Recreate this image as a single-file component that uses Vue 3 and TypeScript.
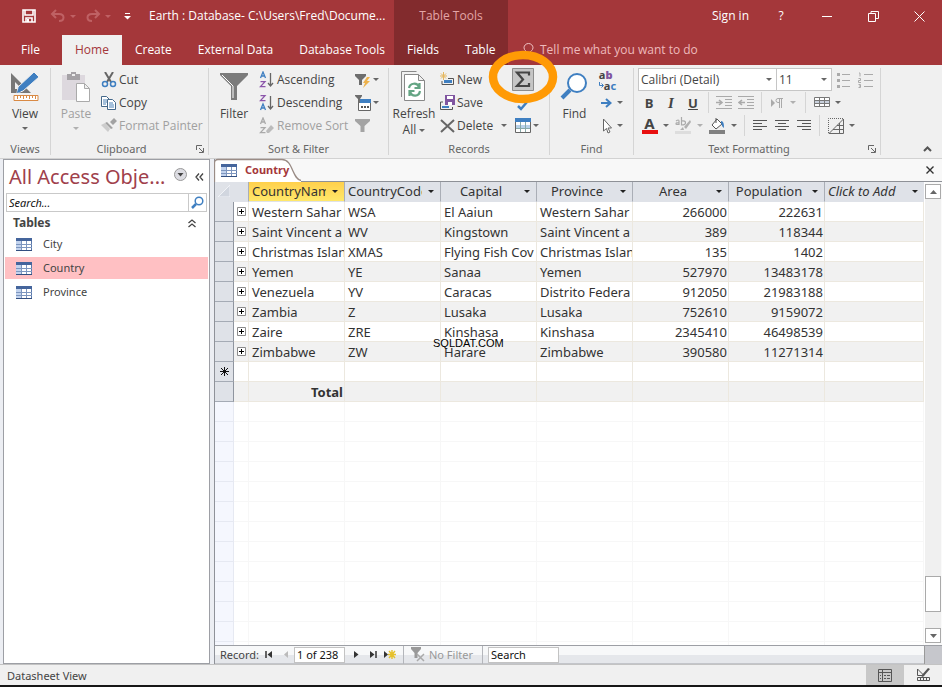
<script setup lang="ts">
import { ref } from 'vue'

interface Country {
  name: string
  code: string
  capital: string
  province: string
  area: number
  population: number
}

const countries: Country[] = [
  { name: 'Western Sahar', code: 'WSA', capital: 'El Aaiun', province: 'Western Sahar', area: 266000, population: 222631 },
  { name: 'Saint Vincent a', code: 'WV', capital: 'Kingstown', province: 'Saint Vincent a', area: 389, population: 118344 },
  { name: 'Christmas Islan', code: 'XMAS', capital: 'Flying Fish Cov', province: 'Christmas Islan', area: 135, population: 1402 },
  { name: 'Yemen', code: 'YE', capital: 'Sanaa', province: 'Yemen', area: 527970, population: 13483178 },
  { name: 'Venezuela', code: 'YV', capital: 'Caracas', province: 'Distrito Federa', area: 912050, population: 21983188 },
  { name: 'Zambia', code: 'Z', capital: 'Lusaka', province: 'Lusaka', area: 752610, population: 9159072 },
  { name: 'Zaire', code: 'ZRE', capital: 'Kinshasa', province: 'Kinshasa', area: 2345410, population: 46498539 },
  { name: 'Zimbabwe', code: 'ZW', capital: 'Harare', province: 'Zimbabwe', area: 390580, population: 11271314 },
]

const columns = ['CountryName', 'CountryCode', 'Capital', 'Province', 'Area', 'Population']
const tables = ['City', 'Country', 'Province']
const tabs = ['File', 'Home', 'Create', 'External Data', 'Database Tools']
const activeTab = ref('Home')
const selected = ref('Country')
const record = ref('1 of 238')
const find = ref('Search')
const navSearch = ref('')
</script>

<template>
  <div class="app">
    <header class="top">
      <div class="top-left">
        <div class="titlebar">
          <button class="qa save" aria-label="Save">
            <svg width="14" height="14" viewBox="0 0 14 14"><path d="M1 1h12v12H1z M3 1v5h8V1 M4 13V9h6v4" fill="none" stroke="#fff" stroke-width="1.6" /><path d="M5 10h2v3H5z" fill="#fff" /></svg>
          </button>
          <button class="qa undo" aria-label="Undo">
            <svg width="27" height="14" viewBox="0 0 27 14"><path d="M6 1L2 5l4 4M2 5h7c6 0 6 7 0 7" fill="none" stroke="#bf6164" stroke-width="2" /><path d="M20 6h6l-3 3z" fill="#bf6164" /></svg>
          </button>
          <button class="qa redo" aria-label="Redo">
            <svg width="27" height="14" viewBox="0 0 27 14"><path d="M10 1l4 4-4 4M14 5H7c-6 0-6 7 0 7" fill="none" stroke="#bf6164" stroke-width="2" /><path d="M20 6h6l-3 3z" fill="#bf6164" /></svg>
          </button>
          <button class="qa" aria-label="Customize Quick Access Toolbar">
            <svg width="7" height="8" viewBox="0 0 7 8"><path d="M1 1.500h5" stroke="#fff" /><path d="M0 4h7L3.500 7.500z" fill="#fff" /></svg>
          </button>
          <span class="title">Earth : Database- C:\Users\Fred\Docume...</span>
        </div>
        <nav class="tabs">
          <button v-for="t in tabs" :key="t" class="tab" :class="{ active: t === activeTab, file: t === 'File' }" @click="activeTab = t">{{ t }}</button>
        </nav>
      </div>
      <div class="context">
        <div class="context-title">Table Tools</div>
        <nav class="tabs"><button class="tab">Fields</button><button class="tab">Table</button></nav>
      </div>
      <div class="top-right">
        <div class="window">
          <button class="signin">Sign in</button>
          <button class="win" aria-label="Help">?</button>
          <button class="win" aria-label="Minimize"><svg width="10" height="10"><path d="M0 5.500h10" stroke="#fff" /></svg></button>
          <button class="win" aria-label="Restore"><svg width="11" height="11"><path d="M.5 2.500h7v8h-7z M3 2.500v-2h7.500v7H8" fill="none" stroke="#fff" /></svg></button>
          <button class="win" aria-label="Close"><svg width="11" height="11"><path d="M.5.5l10 10M10.500.5l-10 10" stroke="#fff" /></svg></button>
        </div>
        <button class="tellme">
          <svg width="11" height="15" viewBox="0 0 11 15"><path d="M4 10C4 8 1 7.500 1 4.800a4.500 4.300 0 0 1 9 0C10 7.500 7 8 7 10z M4 12h3 M4 14h3" fill="none" stroke="#f0c4c5" /></svg>
          Tell me what you want to do
        </button>
      </div>
    </header>

    <section class="ribbon">
      <div class="group views">
        <div class="body">
          <button class="big">
            <svg width="32" height="32" viewBox="0 0 32 32"><path d="M2 2v20h20z M6 11v7h7z" fill="#777" fill-rule="evenodd" /><path d="M8 22l1-6L25 1l5 5-16 14z" fill="#3f7fc1" stroke="#f0f0f0" /><path d="M8 22l1-4 3 3z" fill="#3f7fc1" /><path d="M5 24.500h24v5H5z" fill="#fff" stroke="#d98a45" /><path d="M8.500 25v3M11.500 25v2M14.500 25v3M17.500 25v2M20.500 25v3M23.500 25v2M26.500 25v3" stroke="#d98a45" /></svg>
            <span>View</span><i class="caret"></i>
          </button>
        </div>
        <div class="label"><span>Views</span></div>
      </div>

      <div class="group clipboard">
        <div class="body">
          <button class="big off">
            <svg width="30" height="32" viewBox="0 0 30 32"><path d="M1 4h23v25H1z" fill="#ddd8de" /><path d="M6 3h4V1h5v2h4v6H6z" fill="#a5a2a6" /><path d="M11 3h3v2h-3z" fill="#eee" /><path d="M15.500 12.500h8l5 5v13h-13z M23.500 12.500v5h5" fill="#fff" stroke="#aaa" /></svg>
            <span>Paste</span><i class="caret"></i>
          </button>
          <div class="list">
            <button class="item"><svg width="16" height="16" viewBox="0 0 16 16"><path d="M4 0l6 10M12 0L6 10" stroke="#666" stroke-width="2" /><circle cx="4" cy="12" r="2.500" fill="none" stroke="#3f7fc1" stroke-width="1.500" /><circle cx="12" cy="12" r="2.500" fill="none" stroke="#3f7fc1" stroke-width="1.500" /></svg>Cut</button>
            <button class="item"><svg width="16" height="16" viewBox="0 0 16 16"><path d="M.5 1.500h5l3 3v7h-8z" fill="#fff" stroke="#44688a" /><path d="M2 5h4M2 7h4M2 9h3" stroke="#4c83b8" /><path d="M6.500 4.500h5l3 3v7h-8z" fill="#fff" stroke="#44688a" /><path d="M8 8h4M8 10h5M8 12h5" stroke="#4c83b8" /></svg>Copy</button>
            <button class="item off"><svg width="16" height="16" viewBox="0 0 16 16"><path d="M9 4l4-4 3 3-4 4z M6 4l6 6-2 1-6-6z" fill="#a2a2a2" /><path d="M4 5L0 7l7 7 2-3z" fill="#ccc" /></svg>Format Painter</button>
          </div>
        </div>
        <div class="label launched"><span>Clipboard</span><button class="launch" aria-label="Clipboard options"><svg width="8" height="8"><path d="M.5 5V.5H6M3 3l4 4M7.500 3v4.500H3" fill="none" stroke="#666" /></svg></button></div>
      </div>

      <div class="group sort">
        <div class="body">
          <button class="big">
            <svg width="28" height="32" viewBox="0 0 28 32"><path d="M0 2h28v2L17 15v14h-6V15L0 4z" fill="#7b7b7b" /><path d="M2 4l11 11v12" fill="none" stroke="#fff" /></svg>
            <span>Filter</span>
          </button>
          <div class="list">
            <button class="item"><svg width="16" height="18" viewBox="0 0 16 18"><path d="M1.500 7L4 1l2.500 6M2.500 5h3" fill="none" stroke="#3f7fc1" stroke-width="1.300" /><path d="M1.500 10.600h4.500l-4.500 5h5" fill="none" stroke="#8b55aa" stroke-width="1.300" /><path d="M11.500 2v13M9 12l2.500 3 2.500-3" fill="none" stroke="#666" stroke-width="1.300" /></svg>Ascending</button>
            <button class="item"><svg width="16" height="18" viewBox="0 0 16 18"><path d="M1.500 1.600h4.500l-4.500 5h5" fill="none" stroke="#8b55aa" stroke-width="1.300" /><path d="M1.500 16L4 10l2.500 6M2.500 14h3" fill="none" stroke="#3f7fc1" stroke-width="1.300" /><path d="M11.500 2v13M9 12l2.500 3 2.500-3" fill="none" stroke="#666" stroke-width="1.300" /></svg>Descending</button>
            <button class="item off"><svg width="16" height="18" viewBox="0 0 16 18"><path d="M1.500 7L4 1l2.500 6M2.500 5h3M1.500 10.600h4.500l-4.500 5h5" fill="none" stroke="#aaa" stroke-width="1.300" /><path d="M7 14l5-6 3 3-5 5H8z" fill="#bbb" /></svg>Remove Sort</button>
          </div>
          <div class="list icons">
            <button class="item" aria-label="Selection filter"><svg width="16" height="16" viewBox="0 0 16 16"><path d="M0 2h11v2L7 8v5H4V8L0 4z" fill="#6d6d6d" /><path d="M12 5h3l-3 4h3l-7 7 2-5H8z" fill="#eeb24b" /></svg><i class="caret"></i></button>
            <button class="item" aria-label="Advanced filter"><svg width="16" height="16" viewBox="0 0 16 16"><path d="M3.500 4.500h12v11h-12z" fill="#fff" stroke="#666" /><path d="M4 4h12v4H4z" fill="#3f7fc1" /><path d="M0 0h7v1L5 4v4H3V4L0 1z" fill="#6d6d6d" /><path d="M6 12h2M9 12h2M12 12h2" stroke="#555" stroke-width="2" /></svg><i class="caret"></i></button>
            <button class="item" aria-label="Toggle filter"><svg width="16" height="16" viewBox="0 0 16 16"><path d="M0 1h15v2L9.500 8v6h-4V8L0 3z" fill="#a4a4a4" /></svg></button>
          </div>
        </div>
        <div class="label"><span>Sort &amp; Filter</span></div>
      </div>

      <div class="group records">
        <div class="body">
          <button class="big">
            <svg width="26" height="32" viewBox="0 0 26 32"><path d="M.5 26V.5h15" fill="none" stroke="#888" /><path d="M3.500 3.500h14l6 6v20h-20z M17.500 3.500v6h6" fill="#fff" stroke="#888" /><path d="M8 17c1-5 8-6 10-1M18.500 12v5h-5M19 20c-1 6-8 6-10 1M8.500 25v-5h5" fill="none" stroke="#64a584" stroke-width="2.200" /></svg>
            <span>Refresh</span><span class="second">All <i class="caret"></i></span>
          </button>
          <div class="list">
            <button class="item"><svg width="15" height="16" viewBox="0 0 15 16"><path d="M3.500 0v8M0 4h7M1 1.500l5 5M6 1.500l-5 5" stroke="#e5b75e" /><path d="M8 6.500h5.500v6H2V9" fill="none" stroke="#555" /><path d="M4 8h8v3H4z" fill="#3f7fc1" /></svg>New</button>
            <button class="item"><svg width="15" height="16" viewBox="0 0 15 16"><path d="M3 7H.5v7.500h12V12" fill="none" stroke="#555" /><path d="M2 11h7v2H2z" fill="#3f7fc1" /><path d="M5 0h10v10H5z" fill="#8055a0" /><path d="M7 1h6v3H7z M8 7h4v3H8z" fill="#fff" /></svg>Save</button>
            <button class="item"><svg width="15" height="16" viewBox="0 0 15 16"><path d="M1 2l13 12M14 2L1 14" stroke="#666" stroke-width="2" /></svg>Delete<i class="caret end"></i></button>
          </div>
          <div class="list tools">
            <button class="item totals" aria-label="Totals">
              <svg width="22" height="23" viewBox="0 0 22 23"><path d="M.5.5h21v22H.5z" fill="#c6c6c6" stroke="#8d8d8d" /><path d="M17 7.500V4.500H5l6 7-6 6.500h12v-3" fill="none" stroke="#444" stroke-width="2.200" /></svg>
              <svg class="ring" width="70" height="54" viewBox="0 0 70 54"><ellipse cx="35" cy="27" rx="30" ry="22" fill="none" stroke="#ff9a05" stroke-width="8.500" /></svg>
            </button>
            <button class="item" aria-label="Spelling"><svg width="16" height="16" viewBox="0 0 16 16"><path d="M3 11l3 3 6-7" fill="none" stroke="#3f7fc1" stroke-width="2.500" /></svg></button>
            <button class="item" aria-label="More"><svg width="16" height="15" viewBox="0 0 16 15"><path d="M.5.5h15v14H.5z" fill="#fff" stroke="#666" /><path d="M0 0h16v4H0z" fill="#3f7fc1" /><path d="M1 7h14v3H1z" fill="#b8d2ea" /><path d="M5.500 4v10M10.500 4v10M1 10.500h14" stroke="#8aa" /></svg><i class="caret"></i></button>
          </div>
        </div>
        <div class="label"><span>Records</span></div>
      </div>

      <div class="group find">
        <div class="body">
          <button class="big">
            <svg width="28" height="32" viewBox="0 0 28 32"><path d="M10 19L2 27" stroke="#3f7fc1" stroke-width="4" /><circle cx="17" cy="12" r="9" fill="#fff" stroke="#3f7fc1" stroke-width="2" /></svg>
            <span>Find</span>
          </button>
          <div class="list icons">
            <button class="item" aria-label="Replace">
              <span class="abac"><span>a<b>b</b></span><span class="swap"><svg width="5" height="6" viewBox="0 0 5 6"><path d="M.5 0v3.500H4M2.500 1.500l2 2-2 2" fill="none" stroke="#3f7fc1" /></svg>a<em>c</em></span></span>
            </button>
            <button class="item" aria-label="Go To"><svg width="16" height="16" viewBox="0 0 16 16"><path d="M2 8h9M7 4l4.500 4L7 12" fill="none" stroke="#3f7fc1" stroke-width="2" /></svg><i class="caret"></i></button>
            <button class="item" aria-label="Select"><svg width="16" height="16" viewBox="0 0 16 16"><path d="M4.500 1v12l3-2.500L9 15l2-1-2-4h3.500z" fill="#fff" stroke="#666" /></svg><i class="caret"></i></button>
          </div>
        </div>
        <div class="label"><span>Find</span></div>
      </div>

      <div class="group format">
        <div class="rows">
          <div class="row">
            <div class="combo font"><select aria-label="Font"><option>Calibri (Detail)</option></select><i class="caret"></i></div>
            <div class="combo size"><select aria-label="Font size"><option>11</option></select><i class="caret"></i></div>
            <button class="ic bullets" aria-label="Bullets"><svg width="14" height="16" viewBox="0 0 14 16"><path d="M5 2.500h8M5 8.500h8M5 14.500h8" stroke="#aaa" /><path d="M0 2.500h3M0 8.500h3M0 14.500h3" stroke="#aaa" stroke-width="3" /></svg></button>
            <button class="ic numbering" aria-label="Numbering"><svg width="15" height="16" viewBox="0 0 15 16"><path d="M6 2.500h9M6 8.500h9M6 14.500h9" stroke="#aaa" /><path d="M1 1h1v3.500M.5 6.500h2v2h-2v2h2.500M.5 12.500h2v3h-2M1 14h1" fill="none" stroke="#aaa" /></svg></button>
          </div>
          <div class="row">
            <button class="ic glyph"><b>B</b></button>
            <button class="ic glyph"><em>I</em></button>
            <button class="ic glyph"><u>U</u></button>
            <span class="bar"></span>
            <button class="ic" aria-label="Increase indent"><svg width="16" height="13" viewBox="0 0 16 13"><path d="M0 .5h16M9 3.500h7M9 6.500h7M9 9.500h7M0 12.500h16" stroke="#aaa" /><path d="M0 6.500h6M3 4l3 2.500L3 9" fill="none" stroke="#aaa" stroke-width="1.600" /></svg></button>
            <button class="ic" aria-label="Decrease indent"><svg width="16" height="13" viewBox="0 0 16 13"><path d="M0 .5h16M9 3.500h7M9 6.500h7M9 9.500h7M0 12.500h16" stroke="#aaa" /><path d="M7 6.500H1M4 4L1 6.500 4 9" fill="none" stroke="#aaa" stroke-width="1.600" /></svg></button>
            <span class="bar"></span>
            <button class="ic wide off" aria-label="Text direction"><svg width="12" height="12" viewBox="0 0 12 12"><path d="M0 2l4 4-4 4z" fill="#aaa" /><path d="M12 1.500H7a2 2 0 0 0 0 4h1M8.500 2v9M10.500 2v9" fill="none" stroke="#aaa" /></svg><i class="caret"></i></button>
            <span class="bar"></span>
            <button class="ic wide grid" aria-label="Gridlines"><svg width="16" height="12" viewBox="0 0 16 12"><path d="M.5.5h15v9H.5z" fill="#fff" stroke="#777" /><path d="M1 3h14v3H1z" fill="#c8d0dc" /><path d="M5.500 0v10M10.500 0v10M0 3.500h16M0 6.500h16" stroke="#777" /></svg><i class="caret"></i></button>
          </div>
          <div class="row">
            <button class="ic wide color"><span class="fontcolor">A</span><i class="caret"></i></button>
            <button class="ic wide off highlight" aria-label="Highlight"><svg width="17" height="17" viewBox="0 0 17 17"><path d="M1 4q3-2 3 0v4M4 5.500q-3 0-3 1.300T4 7M6.500 0v8q4 0 4-2.300T6.500 4" fill="none" stroke="#aaa" stroke-width="1.200" /><path d="M15 3L9 10l2 2 5-7z M8 10l-3 3h4z" fill="#b0b0b0" /><path d="M0 14h16v3H0z" fill="#ddd" /></svg><i class="caret"></i></button>
            <button class="ic wide fill" aria-label="Background color"><svg width="17" height="17" viewBox="0 0 17 17"><path d="M8 2l5 5-6 5-4-4z M7 1v5" fill="#fff" stroke="#555" /><path d="M12 4c3 0 3 4 3 7-2-1-2-3-3-5z" fill="#3f7fc1" /><path d="M0 13h16v4H0z" fill="#808080" /></svg><i class="caret"></i></button>
            <span class="bar"></span>
            <button class="ic" aria-label="Align left"><svg width="14" height="12" viewBox="0 0 14 12"><path d="M0 .5h14M0 3.500h9M0 6.500h14M0 9.500h9" stroke="#555" /></svg></button>
            <button class="ic" aria-label="Center"><svg width="14" height="12" viewBox="0 0 14 12"><path d="M0 .5h14M3 3.500h8M0 6.500h14M3 9.500h8" stroke="#555" /></svg></button>
            <button class="ic" aria-label="Align right"><svg width="14" height="12" viewBox="0 0 14 12"><path d="M0 .5h14M5 3.500h9M0 6.500h14M5 9.500h9" stroke="#555" /></svg></button>
            <span class="bar"></span>
            <button class="ic wide grid" aria-label="Alternate row color"><svg width="16" height="16" viewBox="0 0 16 16"><path d="M.5 15V.5H15" fill="none" stroke="#666" stroke-dasharray="1 1" /><path d="M1 15.500L15.500 1v14.500z M15 7.500H9M15 11.500H5M11.500 5v10" fill="none" stroke="#666" /></svg><i class="caret"></i></button>
          </div>
        </div>
        <div class="label launched"><span>Text Formatting</span><button class="launch" aria-label="Text formatting options"><svg width="8" height="8"><path d="M.5 5V.5H6M3 3l4 4M7.500 3v4.500H3" fill="none" stroke="#666" /></svg></button></div>
      </div>
      <button class="collapse" aria-label="Collapse the ribbon"><svg width="9" height="6"><path d="M1 5l3.500-3.500L8 5" fill="none" stroke="#555" stroke-width="2" /></svg></button>
    </section>

    <main class="work">
      <aside class="nav">
        <div class="nav-head">
          <h1>All Access Obje...</h1>
          <button class="round" aria-label="Choose category"><svg width="13" height="13" viewBox="0 0 13 13"><circle cx="6.500" cy="6.500" r="6" fill="#dcdce2" stroke="#999" /><path d="M3.500 5h6l-3 3.500z" fill="#444" /></svg></button>
          <button aria-label="Collapse navigation"><svg width="9" height="8"><path d="M4 .5L1 4l3 3.500M8 .5L5 4l3 3.500" fill="none" stroke="#444" stroke-width="1.300" /></svg></button>
        </div>
        <label class="nav-search">
          <input v-model="navSearch" type="text" placeholder="Search..." aria-label="Search objects" />
          <span class="lens"><svg width="13" height="13" viewBox="0 0 13 13"><path d="M5 8l-4 4" stroke="#3f7fc1" stroke-width="2.500" /><circle cx="8" cy="5" r="3.800" fill="#fff" stroke="#3f7fc1" stroke-width="1.500" /></svg></span>
        </label>
        <button class="section">Tables<svg width="8" height="9"><path d="M.5 4L4 1l3.500 3M.5 8L4 5l3.500 3" fill="none" stroke="#444" stroke-width="1.300" /></svg></button>
        <button v-for="t in tables" :key="t" class="object" :class="{ on: t === selected }" @click="selected = t">
          <svg width="16" height="13" viewBox="0 0 16 13"><path d="M.5.5h15v12H.5z" fill="#fff" stroke="#5b79ab" /><path d="M0 0h16v3H0z" fill="#45659c" /><path d="M0 3h5v10H0z" fill="#c2d3ee" /><path d="M5.500 3v10M10.500 3v10M0 6.500h16M0 9.500h16" stroke="#7d96bf" /><path d="M0 12.500h16" stroke="#334f80" /></svg>
          <span>{{ t }}</span>
        </button>
      </aside>

      <section class="doc">
        <div class="doc-tabs">
          <div class="doc-tab">
            <svg class="shape" width="88" height="24" viewBox="0 0 88 24"><path d="M.5 24V5Q.5 1.500 4 1.500H68C79 1.500 78 21 87 22.500V24z" fill="#fff" /><path d="M.5 24V5Q.5 1.500 4 1.500H68C79 1.500 78 21 87 22.500" fill="none" stroke="#9a8c86" stroke-width="1.300" /></svg>
            <svg width="16" height="13" viewBox="0 0 16 13"><path d="M.5.5h15v12H.5z" fill="#fff" stroke="#5b79ab" /><path d="M0 0h16v3H0z" fill="#45659c" /><path d="M0 3h5v10H0z" fill="#c2d3ee" /><path d="M5.500 3v10M10.500 3v10M0 6.500h16M0 9.500h16" stroke="#7d96bf" /><path d="M0 12.500h16" stroke="#334f80" /></svg>
            <span>Country</span>
          </div>
          <button aria-label="Close Country"><svg width="8" height="8"><path d="M.5.5l7 7M7.500.5l-7 7" stroke="#333" stroke-width="1.400" /></svg></button>
        </div>
        <div class="sheet-row">
          <div class="sheet">
            <table>
              <colgroup>
                <col class="c-sel" /><col class="c-exp" /><col v-for="c in columns" :key="c" class="c-data" /><col />
              </colgroup>
              <thead>
                <tr>
                  <th class="corner" colspan="2"><svg width="12" height="12"><path d="M12 0v12H0z" fill="#d1d6df" stroke="#f1f3f7" /></svg></th>
                  <th v-for="(c, i) in columns" :key="c" :class="{ picked: i === 0 }"><div><span>{{ c }}</span><i class="caret dark"></i></div></th>
                  <th class="add"><div><span>Click to Add</span><i class="caret dark"></i></div></th>
                </tr>
              </thead>
              <tbody>
                <tr v-for="(r, i) in countries" :key="r.code" :class="{ alt: i % 2 === 1 }">
                  <td class="sel"></td>
                  <td class="exp"><button :aria-label="'Expand ' + r.name"><svg width="9" height="9"><path d="M.5.5h8v8h-8z" fill="#fff" stroke="#8b8b8b" /><path d="M2 4.500h5M4.500 2v5" stroke="#000" /></svg></button></td>
                  <td>{{ r.name }}</td>
                  <td>{{ r.code }}</td>
                  <td>{{ r.capital }}</td>
                  <td>{{ r.province }}</td>
                  <td class="num">{{ r.area }}</td>
                  <td class="num">{{ r.population }}</td>
                  <td></td>
                </tr>
                <tr>
                  <td class="sel star"><svg width="9" height="9"><path d="M4.500 0v9M0 4.500h9M1 1l7 7M8 1L1 8" stroke="#111" /></svg></td>
                  <td v-for="n in 8" :key="n"></td>
                </tr>
                <tr class="alt">
                  <td class="sel"></td><td></td>
                  <td class="total">Total</td>
                  <td v-for="n in 6" :key="n"></td>
                </tr>
                <tr v-for="n in 40" :key="n" class="blank">
                  <td class="sel"></td><td v-for="m in 8" :key="m"></td>
                </tr>
              </tbody>
            </table>
            <span class="mark">SQLDAT.COM</span>
          </div>
          <div class="scroll">
            <button aria-label="Scroll up"><svg width="7" height="4"><path d="M0 4h7L3.500 0z" fill="#666" /></svg></button>
            <div class="track"><span class="thumb"></span></div>
            <button aria-label="Scroll down"><svg width="7" height="4"><path d="M0 0h7L3.500 4z" fill="#666" /></svg></button>
          </div>
        </div>
        <div class="recbar">
          <label for="rec">Record:</label>
          <button aria-label="First record"><svg width="8" height="7"><path d="M1 0v7" stroke="#333" stroke-width="1.500" /><path d="M7 0v7L2.500 3.500z" fill="#333" /></svg></button>
          <button aria-label="Previous record"><svg width="8" height="7"><path d="M6 0v7L2 3.500z" fill="#bbb" /></svg></button>
          <input id="rec" v-model="record" class="rec" type="text" />
          <button aria-label="Next record"><svg width="8" height="7"><path d="M2 0v7l4.500-3.500z" fill="#333" /></svg></button>
          <button aria-label="Last record"><svg width="8" height="7"><path d="M7 0v7" stroke="#333" stroke-width="1.500" /><path d="M1 0v7l4.500-3.500z" fill="#333" /></svg></button>
          <button aria-label="New record"><svg width="13" height="9"><path d="M1 1v7l4-3.500z" fill="#333" /><path d="M9 0v9M5 4.500h8M6 1l6 7M12 1L6 8" stroke="#e6c12c" stroke-width="1.400" /></svg></button>
          <button class="nofilter"><svg width="14" height="15" viewBox="0 0 14 15"><path d="M0 0h10v2L6.500 6v5h-3V6L0 2z" fill="#999" /><path d="M6 7l7 7M13 7l-7 7" stroke="#aaa" stroke-width="1.500" /></svg>No Filter</button>
          <input v-model="find" class="find-box" type="text" aria-label="Search records" />
          <span class="spare"></span><span class="grip"></span>
        </div>
      </section>
    </main>

    <footer class="status">
      <span>Datasheet View</span>
      <button class="view-btn on" aria-label="Datasheet View"><svg width="14" height="13" viewBox="0 0 14 13"><path d="M.5.5h13v12H.5z M0 3.500h14M4.500 0v13" fill="none" stroke="#555" /><path d="M2 6.500h1M2 9.500h1M6 6.500h2M9 6.500h3M6 9.500h2M9 9.500h3" stroke="#555" /></svg></button>
      <button class="view-btn" aria-label="Design View"><svg width="15" height="14" viewBox="0 0 15 14"><path d="M1.500 1v6.500H8z" fill="none" stroke="#555" /><path d="M5 8l7-8 2 1-7 8z" fill="#555" /><path d="M1.500 9.500h12v3h-12z M4.500 10v2M7.500 10v2M10.500 10v2" fill="none" stroke="#555" /></svg></button>
    </footer>
    <div class="edge"></div>
  </div>
</template>

<style>
body { margin: 0; }
</style>

<style scoped>
* { box-sizing: border-box; }
.app { height: 100vh; display: flex; flex-direction: column; overflow: hidden; background: #f0f0f0; color: #444; font: 12px/16px "Open Sans", "Noto Sans", sans-serif; }
button { border: 0; padding: 0; background: none; font: inherit; color: inherit; display: flex; align-items: center; white-space: nowrap; }
input, select { font: inherit; min-width: 0; }
svg { display: block; flex: none; }
.caret { width: 0; height: 0; flex: none; display: inline-block; border: 3px solid transparent; border-top-color: #666; border-bottom: 0; }
.caret.dark { border-top-color: #222; }

.top { flex: none; display: grid; grid-template-columns: 394px 114px 1fr; height: 65px; background: #a4373a; color: #fff; }
.top-left, .context, .top-right { display: flex; flex-direction: column; justify-content: space-between; min-width: 0; }
.titlebar { display: flex; align-items: center; height: 32px; padding-left: 22px; }
.save { margin-right: 14px; }
.undo, .redo { margin-right: 8px; }
.redo { margin-right: 12px; }
.title { margin-left: 18px; white-space: nowrap; }
.tabs { display: flex; height: 30px; }
.tab { padding: 0 13px; }
.tab.file { padding: 0 22px 0 21px; }
.tab.active { background: #f0f0f0; color: #a4373a; }
.context { background: #822b2d; }
.context-title { height: 32px; line-height: 32px; text-align: center; color: #e3a5a7; }
.window { display: flex; justify-content: flex-end; height: 32px; }
.signin { padding-right: 9px; }
.win { width: 46px; justify-content: center; }
.tellme { height: 30px; padding-left: 15px; gap: 6px; color: #edbabc; }

.ribbon { flex: none; display: flex; height: 94px; border-bottom: 1px solid #d2d2d2; background: #f0f0f0; }
.group { display: flex; flex-direction: column; justify-content: space-between; margin: 3px 0; border-right: 1px solid #d5d5d5; }
.views { width: 51px; }
.clipboard { width: 158px; }
.sort { width: 180px; }
.records { width: 161px; }
.find { width: 84px; }
.format { width: 247px; }
.body { display: flex; height: 69px; }
.big { flex-direction: column; width: 50px; padding-top: 3px; }
.big span { margin-top: 3px; }
.big .caret { margin-top: 5px; }
.big .second { margin-top: 0; }
.big .second .caret { margin: 0 0 2px; }
.off { color: #a0a0a0; }
.off .caret { border-top-color: #b0b0b0; }
.list { display: flex; flex-direction: column; }
.item { height: 23px; gap: 2px; }
.sort .icons { margin-left: auto; width: 33px; }
.find .icons { margin-left: auto; width: 35px; gap: 0; }
.end { margin-left: 6px; }
.records .list { margin-left: 1px; }
.records .list.tools { margin-left: auto; width: 37px; }
.records .tools .item { padding-left: 3px; }
.records .tools .totals { position: relative; padding: 0; }
.ring { position: absolute; left: -24px; top: -18px; z-index: 2; }
.abac { font: 700 11px/11px "Noto Sans", sans-serif; text-align: left; display: flex; flex-direction: column; }
.abac b { color: #8055a0; }
.abac em { color: #3f7fc1; font-style: normal; }
.swap { display: flex; align-items: center; }
.label { display: grid; grid-template-columns: 1fr; align-items: center; text-align: center; height: 16px; padding-top: 2px; font-size: 11px; color: #666; font-family: "Noto Sans", sans-serif; }
.label.launched { grid-template-columns: 1fr 16px; }
.label span { white-space: nowrap; }
.launch { padding-left: 4px; }
.collapse { margin-left: auto; align-self: flex-end; padding: 0 10px 6px; }

.rows { display: flex; flex-direction: column; padding-left: 4px; }
.row { display: flex; align-items: center; height: 23px; }
.combo { position: relative; height: 23px; display: flex; border: 1px solid #c6c6c6; background: #fff; }
.combo.font { width: 139px; }
.combo.size { width: 55px; border-left: 0; }
.combo select { width: 100%; border: 0; appearance: none; background: none; padding: 0 2px; color: #444; }
.combo .caret { position: absolute; right: 4px; top: 9px; }
.bullets { margin-left: 4px; }
.numbering { margin-left: 7px; }
.ic { width: 22px; height: 23px; justify-content: center; }
.bullets, .numbering { width: 15px; }
.glyph { font-size: 13px; }
.glyph em { font-family: "Liberation Serif", serif; font-weight: 700; font-size: 15px; }
.glyph u { font-weight: 700; }
.ic.wide { width: 35px; gap: 7px; }
.ic.color, .ic.highlight, .ic.fill { width: 34px; gap: 5px; }
.ic.grid { gap: 5px; }
.bar { width: 1px; height: 21px; margin: 0 4px; background: #d5d5d5; }
.fontcolor { width: 16px; height: 17px; border-bottom: 4px solid #e81010; font: 700 15px/12px "Noto Sans", sans-serif; text-align: center; }

.work { flex: 1; min-height: 0; display: flex; background: #eceef3; padding-left: 3px; gap: 4px; }
.nav { width: 207px; flex: none; padding: 0 1px; border: 1px solid #9d9fa5; background: #fff; font-family: "Noto Sans", sans-serif; }
.nav-head { display: flex; align-items: center; height: 33px; padding: 0 4px; }
h1 { flex: 1; margin: 0; font-size: 20px; line-height: 34px; font-weight: 400; color: #a0404b; white-space: nowrap; }
.round { margin: 0 8px 4px 0; }
.nav-search { display: flex; height: 19px; margin: 0 1px; border: 1px solid #c9c9c9; }
.nav-search input { flex: 1; border: 0; padding: 0 2px; outline: 0; font-size: 11px; font-style: italic; }
.nav-search input::placeholder { color: #111; opacity: 1; }
.lens { display: flex; align-items: center; justify-content: center; width: 18px; border-left: 1px solid #c9c9c9; }
.section { width: 100%; height: 20px; padding: 2px 12px 0 8px; justify-content: space-between; font-weight: 700; }
.object { width: 100%; height: 22px; margin: 1px 0 2px; padding-left: 11px; gap: 11px; font-size: 11px; }
.object.on { background: #ffc0c3; }

.doc { flex: 1; min-width: 0; display: flex; flex-direction: column; border-left: 1px solid #8f9299; font-family: "Noto Sans", sans-serif; }
.doc-tabs { flex: none; display: flex; justify-content: space-between; height: 23px; padding-right: 8px; border-bottom: 1px solid #8e9197; background: #f8f8f8; }
.doc-tab { position: relative; display: flex; align-items: center; gap: 8px; padding-left: 6px; font-weight: 700; font-size: 11px; color: #a4373a; }
.doc-tab svg, .doc-tab span { position: relative; }
.doc-tab .shape { position: absolute; left: -1px; top: -1px; }
.sheet-row { flex: 1; min-height: 0; display: flex; background: #fff; }
.sheet { position: relative; flex: 1; min-width: 0; overflow: hidden; }
table { width: 100%; table-layout: fixed; border-collapse: separate; border-spacing: 0; font-size: 13px; line-height: 17px; color: #333; }
.c-sel { width: 19px; }
.c-exp { width: 15px; }
.c-data { width: 96px; }
th, td { height: 20px; padding: 2px 0 0 3px; overflow: hidden; white-space: nowrap; border-right: 1px solid #ece8df; border-bottom: 1px solid #ece8df; }
th { padding: 0 6px 1px 3px; font-weight: 400; background: #dfe2e8; border-right-color: #aaaeb6; border-bottom-color: #dfe2e8; }
th div { display: flex; align-items: center; gap: 6px; }
th span { flex: 1; overflow: hidden; }
th.picked { background: linear-gradient(#ffd04c, #ffe86a); }
th.add { border-right: 0; font-style: italic; text-align: left; }
.corner { padding-left: 3px; }
td.num { text-align: right; padding-right: 1px; padding-left: 0; }
.alt td { background: #f1f1f1; }
td.sel, .alt td.sel { background: #dfe2e8; border-right-color: #8f959f; border-bottom-color: #a5abb5; padding: 0; }
td.exp { padding: 0 0 0 3px; }
td.star { padding-left: 5px; }
.blank td { border-color: #f7f7f7; }
.blank td.sel { background: #f5f7fe; border-color: #e6e9f2; }
td.total { text-align: right; font-weight: 700; padding-right: 1px; }
.mark { position: absolute; left: 218px; top: 154px; font: 11px/14px "Liberation Sans", sans-serif; color: #000; }
.scroll { flex: none; width: 17px; margin-left: 1px; padding: 2px 1px 2px 0; display: flex; flex-direction: column; background: #fafafa; }
.scroll button { height: 15px; justify-content: center; border: 1px solid #aaa; background: #fff; }
.track { flex: 1; display: flex; flex-direction: column; justify-content: flex-end; padding-bottom: 16px; background: #f0f0f0; }
.thumb { height: 36px; border: 1px solid #aaa; background: #fff; }
.recbar { flex: none; display: flex; align-items: center; height: 19px; padding-left: 5px; border-top: 1px solid #9d9fa5; border-bottom: 1px solid #c3c5ca; background: linear-gradient(#f7f8f9 0 50%, #e5e7eb 50%); font-size: 11px; }
.recbar > label { width: 40px; }
.recbar button { width: 17px; justify-content: center; }
.recbar input { height: 16px; border: 1px solid #c3c3c3; padding: 0 2px; background: #fff; color: #111; }
.rec { width: 51px; margin-right: 2px; }
.recbar .nofilter { width: 80px; height: 18px; margin: 0 5px; padding-left: 7px; gap: 4px; justify-content: flex-start; border: 1px solid #b4b6bb; border-width: 0 1px; color: #999; }
.find-box { width: 71px; }
.spare { flex: 1; }
.grip { width: 18px; height: 18px; border-left: 1px solid #999; background: #c6c7cc; }

.status { flex: none; display: flex; align-items: stretch; height: 21px; line-height: 21px; padding-left: 7px; border-top: 1px solid #c3c3c3; font-size: 11px; font-family: "Noto Sans", sans-serif; }
.status span { flex: 1; }
.view-btn { width: 38px; justify-content: center; }
.view-btn.on { background: #c8c8c8; }
.edge { flex: none; height: 2px; background: #161616; }
</style>
